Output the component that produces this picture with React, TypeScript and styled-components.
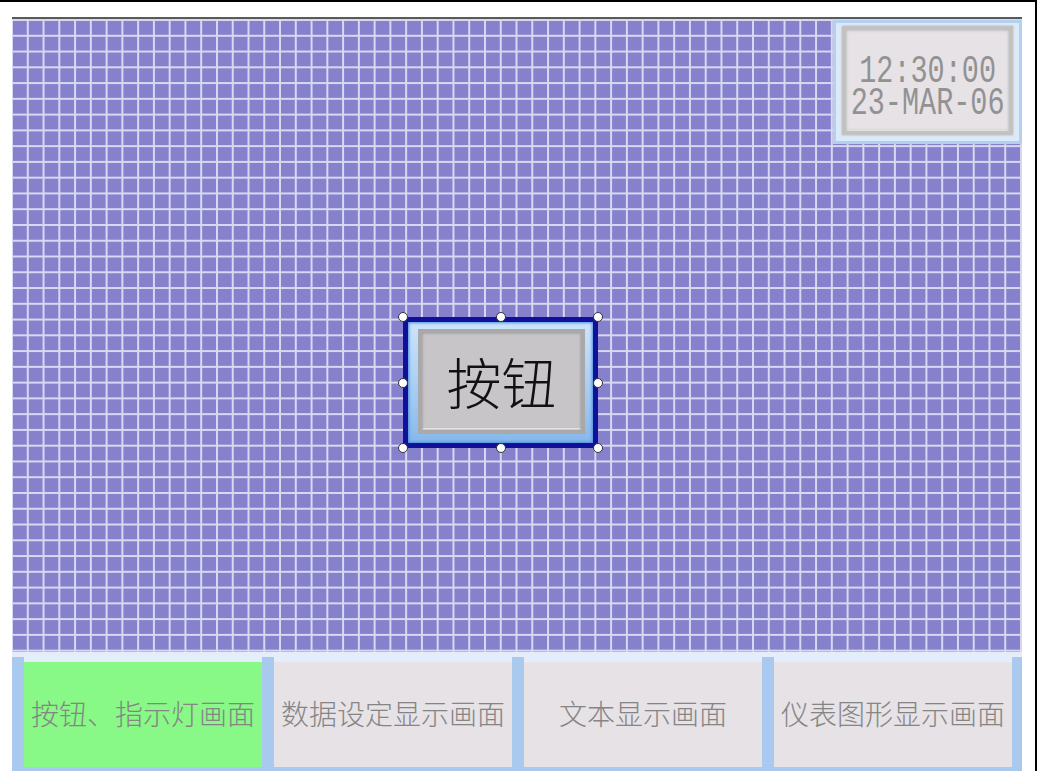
import React from "react";
import styled, { createGlobalStyle } from "styled-components";

const GlobalStyle = createGlobalStyle`
  html, body { margin: 0; padding: 0; background: #ffffff; }
  body { font-family: "Noto Sans CJK SC", "Liberation Sans", sans-serif; }
  * { box-sizing: border-box; }
`;

const Page = styled.div`
  width: 1037px;
  height: 771px;
  border-top: 2px solid #000;
  border-right: 2px solid #000;
  padding: 15px 13px 0 12px;
  background: #fff;
  overflow: hidden;
`;

const Canvas = styled.div`
  height: 754px;
  display: flex;
  flex-direction: column;
  border-top: 2px solid #5a5a5a;
`;

const Grid = styled.div`
  position: relative;
  flex: 1;
  background-color: #8581cd;
  background-image:
    linear-gradient(to right, transparent 13.78px, #d9d8f0 13.78px),
    linear-gradient(to bottom, transparent 13.78px, #d9d8f0 13.78px);
  background-size: 15.78px 15.78px;
  background-position: 1px 2px;
`;

const ClockFrame = styled.div`
  position: absolute;
  top: 1px;
  right: 0;
  width: 189px;
  height: 124px;
  border: 3px solid #b4d0f0;
  background: #dce9f8;
  padding: 3px 6px 6px 6px;
  display: flex;
`;

const ClockFace = styled.div`
  flex: 1;
  min-width: 0;
  background: #e6e2e6;
  border: 4px solid #c2c2c2;
  box-shadow: inset 0 0 3px #a8a8a8, 0 0 2px #b0b0b0, inset 0 -1px 0 #ffffff;
  padding-top: 26px;
  display: flex;
  flex-direction: column;
  align-items: center;
`;

const ClockText = styled.div`
  font-family: "Liberation Mono", "Courier New", monospace;
  font-size: 38px;
  line-height: 32px;
  color: #929292;
  white-space: pre;
  text-align: center;
  transform: scaleX(0.75);
  transform-origin: center top;
`;

const Selection = styled.div`
  position: absolute;
  left: 391px;
  top: 298px;
  width: 195px;
  height: 131px;
  border: 5px solid #10109a;
  background: linear-gradient(to bottom, #cfe4fa, #a4cbf2 60%, #86b8ec);
  box-shadow: inset 0 0 3px 1px #4a8ede;
  padding: 7px 8px 9px 10px;
  display: flex;
`;

const ButtonFace = styled.div`
  flex: 1;
  background: #c8c5c9;
  border: 4px solid #a9a9a9;
  box-shadow: inset 0 0 3px #8c8c8c, inset 0 -2px 0 #f2f2f2;
  display: flex;
  align-items: center;
  justify-content: center;
  font-family: "Noto Sans CJK SC", sans-serif;
  font-weight: 300;
  font-size: 55px;
  line-height: 1;
  color: #111;
  padding-bottom: 2px;
`;

const Handle = styled.span<{ $x: "l" | "c" | "r"; $y: "t" | "m" | "b" }>`
  position: absolute;
  width: 10px;
  height: 10px;
  border-radius: 50%;
  background: #fff;
  border: 1px solid #333;
  ${(p) => (p.$x === "l" ? "left: -10px;" : p.$x === "r" ? "right: -10px;" : "left: calc(50% - 5px);")}
  ${(p) => (p.$y === "t" ? "top: -10px;" : p.$y === "b" ? "bottom: -10px;" : "top: calc(50% - 5px);")}
`;

const ButtonRow = styled.div`
  height: 119px;
  display: grid;
  grid-template-columns: repeat(4, 1fr);
  column-gap: 12px;
  padding: 5px 10px 4px 12px;
  background: linear-gradient(to bottom, #e3eefa 0, #e3eefa 5px, #a9caee 5px);
`;

const NavButton = styled.div<{ $active?: boolean }>`
  background: ${(p) => (p.$active ? "#88f886" : "#e6e2e6")};
  border-top: 5px solid #e3eefa;
  display: flex;
  align-items: center;
  justify-content: center;
  padding-bottom: 4px;
  font-family: "Noto Sans CJK SC", sans-serif;
  font-weight: 300;
  font-size: 28px;
  color: #858585;
  white-space: nowrap;
`;

const handles: Array<["l" | "c" | "r", "t" | "m" | "b"]> = [
  ["l", "t"], ["c", "t"], ["r", "t"],
  ["l", "m"], ["r", "m"],
  ["l", "b"], ["c", "b"], ["r", "b"],
];

const navItems = ["按钮、指示灯画面", "数据设定显示画面", "文本显示画面", "仪表图形显示画面"];

export default function App() {
  return (
    <>
      <GlobalStyle />
      <Page>
        <Canvas>
          <Grid>
            <ClockFrame>
              <ClockFace>
                <ClockText>{"12:30:00\n23-MAR-06"}</ClockText>
              </ClockFace>
            </ClockFrame>
            <Selection>
              <ButtonFace>按钮</ButtonFace>
              {handles.map(([x, y]) => (
                <Handle key={x + y} $x={x} $y={y} />
              ))}
            </Selection>
          </Grid>
          <ButtonRow>
            {navItems.map((t, i) => (
              <NavButton key={t} $active={i === 0}>
                {t}
              </NavButton>
            ))}
          </ButtonRow>
        </Canvas>
      </Page>
    </>
  );
}
